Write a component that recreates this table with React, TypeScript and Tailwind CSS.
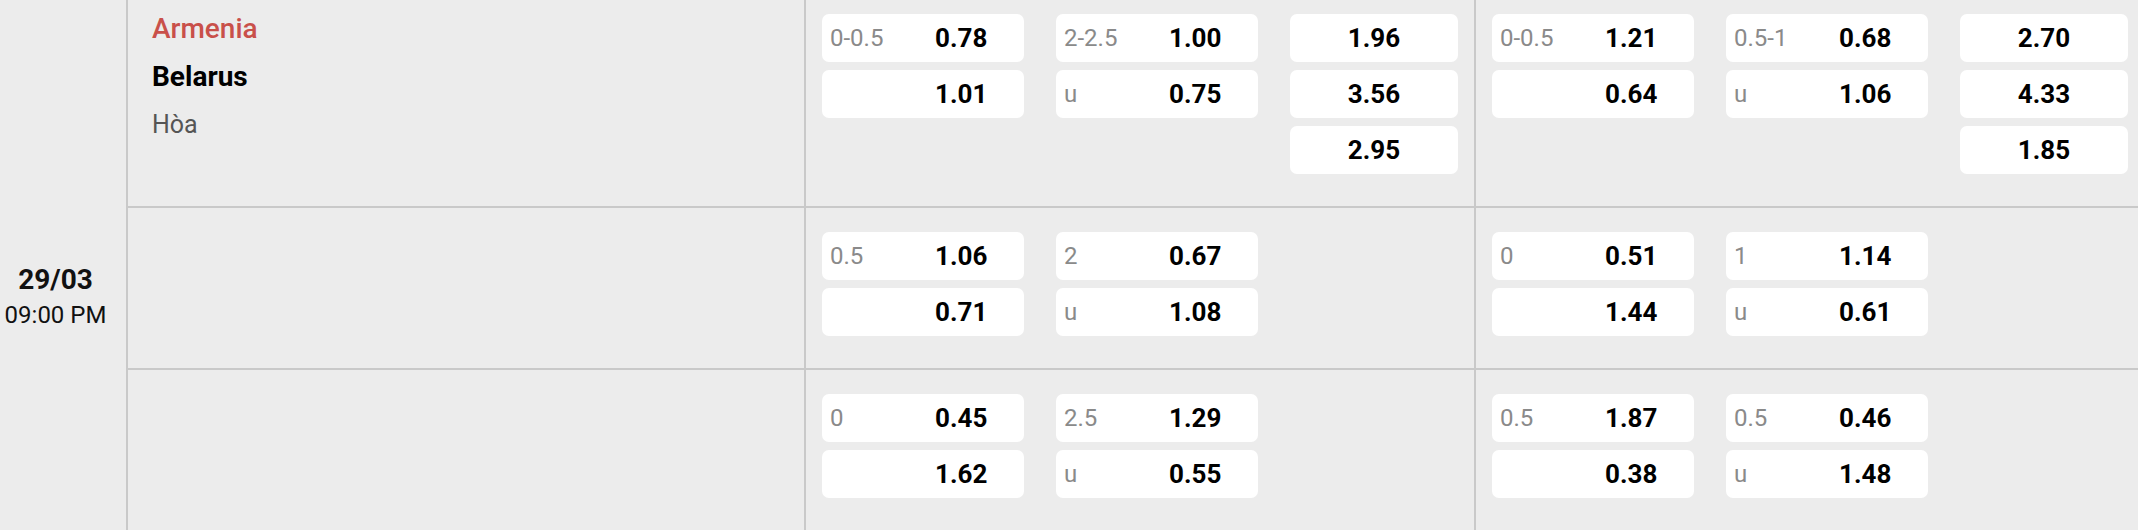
import React from "react";

type Pair = { label?: string; value: string };
type Group = { a: Pair[]; b: Pair[]; c?: string[] };

const rows: { g1: Group; g2: Group }[] = [
  {
    g1: {
      a: [{ label: "0-0.5", value: "0.78" }, { value: "1.01" }],
      b: [{ label: "2-2.5", value: "1.00" }, { label: "u", value: "0.75" }],
      c: ["1.96", "3.56", "2.95"],
    },
    g2: {
      a: [{ label: "0-0.5", value: "1.21" }, { value: "0.64" }],
      b: [{ label: "0.5-1", value: "0.68" }, { label: "u", value: "1.06" }],
      c: ["2.70", "4.33", "1.85"],
    },
  },
  {
    g1: {
      a: [{ label: "0.5", value: "1.06" }, { value: "0.71" }],
      b: [{ label: "2", value: "0.67" }, { label: "u", value: "1.08" }],
    },
    g2: {
      a: [{ label: "0", value: "0.51" }, { value: "1.44" }],
      b: [{ label: "1", value: "1.14" }, { label: "u", value: "0.61" }],
    },
  },
  {
    g1: {
      a: [{ label: "0", value: "0.45" }, { value: "1.62" }],
      b: [{ label: "2.5", value: "1.29" }, { label: "u", value: "0.55" }],
    },
    g2: {
      a: [{ label: "0.5", value: "1.87" }, { value: "0.38" }],
      b: [{ label: "0.5", value: "0.46" }, { label: "u", value: "1.48" }],
    },
  },
];

function PairBox({ p }: { p: Pair }) {
  return (
    <div className="flex h-[48px] w-[202px] items-center rounded-[7px] bg-white pl-[8px]">
      <span className="w-[105px] text-[24px] leading-none text-[#8a8a8a]">{p.label ?? ""}</span>
      <span className="text-[26px] font-bold leading-none text-black">{p.value}</span>
    </div>
  );
}

function SingleBox({ v }: { v: string }) {
  return (
    <div className="flex h-[48px] w-[168px] items-center justify-center rounded-[7px] bg-white text-[26px] font-bold leading-none text-black">
      {v}
    </div>
  );
}

function GroupCell({ g, top, last }: { g: Group; top: boolean; last?: boolean }) {
  return (
    <div
      className={
        (last ? "flex-1 overflow-hidden " : "w-[670px] shrink-0 border-r-2 border-[#c9c9c9] ") +
        (top ? "pt-[14px] " : "pt-[24px] ") +
        "flex gap-[32px] pb-[32px] pl-[16px]"
      }
    >
      <div className="flex flex-col gap-[8px]">
        {g.a.map((p, i) => (
          <PairBox key={i} p={p} />
        ))}
      </div>
      <div className="flex flex-col gap-[8px]">
        {g.b.map((p, i) => (
          <PairBox key={i} p={p} />
        ))}
      </div>
      {g.c && (
        <div className="flex shrink-0 flex-col gap-[8px]">
          {g.c.map((v, i) => (
            <SingleBox key={i} v={v} />
          ))}
        </div>
      )}
    </div>
  );
}

export default function App() {
  return (
    <div
      className="flex h-[530px] w-[2138px] overflow-hidden bg-[#ececec]"
      style={{ fontFamily: "Roboto, 'Noto Sans', sans-serif" }}
    >
      <div className="flex w-[128px] shrink-0 flex-col items-center justify-center border-r-2 border-[#c9c9c9] pr-[15px] pt-[64px] text-[#111]">
        <div className="text-[28px] font-bold leading-[36px]">29/03</div>
        <div className="text-[24px] leading-[34px]">09:00 PM</div>
      </div>
      <div className="flex min-w-0 flex-1 flex-col">
        {rows.map((r, i) => (
          <div
            key={i}
            className={
              "flex " + (i < rows.length - 1 ? "border-b-2 border-[#c9c9c9]" : "flex-1")
            }
          >
            <div className="w-[678px] shrink-0 border-r-2 border-[#c9c9c9] pl-[24px]">
              {i === 0 && (
                <div className="pt-[6px]">
                  <div className="text-[28px] font-medium leading-[46px] text-[#c9504a]">Armenia</div>
                  <div className="text-[28px] font-bold leading-[50px] text-black">Belarus</div>
                  <div className="text-[25px] leading-[46px] text-[#555]">Hòa</div>
                </div>
              )}
            </div>
            <GroupCell g={r.g1} top={i === 0} />
            <GroupCell g={r.g2} top={i === 0} last />
          </div>
        ))}
      </div>
    </div>
  );
}
